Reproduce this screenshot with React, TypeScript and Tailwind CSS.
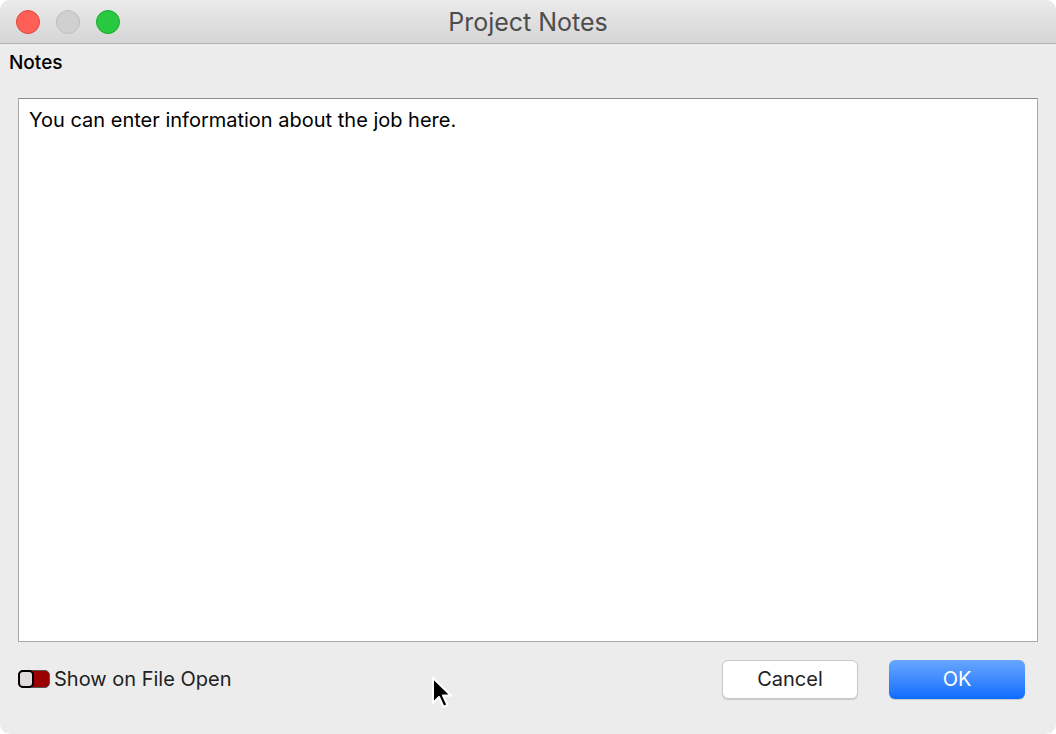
export default function App() {
  return (
    <div className="w-[1056px] h-[734px] bg-white overflow-hidden" style={{ fontFamily: "Inter, 'Noto Sans', sans-serif" }}>
      <div className="relative w-full h-full rounded-[10px] overflow-hidden bg-[#ececec] flex flex-col">
        {/* title bar */}
        <div className="relative h-[44px] shrink-0 flex items-center bg-gradient-to-b from-[#ebebeb] to-[#d5d5d5] border-b border-[#b4b4b4]">
          <div className="flex items-center gap-[16px] pl-[16px]">
            <span className="w-[24px] h-[24px] rounded-full bg-[#fe5f57] border border-[#e2463f]" />
            <span className="w-[24px] h-[24px] rounded-full bg-[#d0d0d0] border border-[#bdbdbd]" />
            <span className="w-[24px] h-[24px] rounded-full bg-[#28c840] border border-[#1aab29]" />
          </div>
          <div className="absolute inset-0 flex items-center justify-center pt-[2px] text-[25px] text-[#4d4d4d] pointer-events-none">
            Project Notes
          </div>
        </div>

        {/* body */}
        <div className="flex-1 flex flex-col px-[18px]">
          <div className="-ml-[9px] pt-[5px] h-[54px] text-[19px] font-medium text-black">Notes</div>
          <div className="h-[544px] bg-white border border-[#a9a9a9] border-t-[#8e8e8e] px-[10px] pt-[6px] text-[20px] text-black">
            You can enter information about the job here.
          </div>
          <div className="flex items-center h-[74px]">
            <div className="flex items-center gap-[4px]">
              <div className="relative w-[32px] h-[18px] rounded-[5px] bg-[#9b0000] border border-[#555]">
                <div className="absolute left-[-1px] top-[-1px] w-[16px] h-[18px] rounded-[5px] bg-[#e0dcdc] border-2 border-black" />
              </div>
              <span className="text-[20px] text-[#222]">Show on File Open</span>
            </div>
            <div className="ml-auto flex items-center gap-[31px] mr-[13px]">
              <button className="w-[136px] h-[39px] rounded-[6px] bg-white border border-[#c8c8c8] shadow-[0_1px_1px_rgba(0,0,0,0.15)] text-[20px] text-[#222]">
                Cancel
              </button>
              <button className="w-[136px] h-[39px] rounded-[6px] bg-gradient-to-b from-[#66a6ff] to-[#0a6bff] text-[20px] text-white shadow-[0_1px_1px_rgba(0,0,0,0.15)]">
                OK
              </button>
            </div>
          </div>
        </div>

        {/* mouse cursor */}
        <svg className="absolute left-[430px] top-[676px]" width="26" height="38" viewBox="0 0 26 38">
          <path d="M3 2 L3 27 L9 21 L13.5 31 L17.5 29 L13 19.5 L21 19.5 Z" fill="black" stroke="white" strokeWidth="2" strokeLinejoin="round" />
        </svg>
      </div>
    </div>
  );
}
